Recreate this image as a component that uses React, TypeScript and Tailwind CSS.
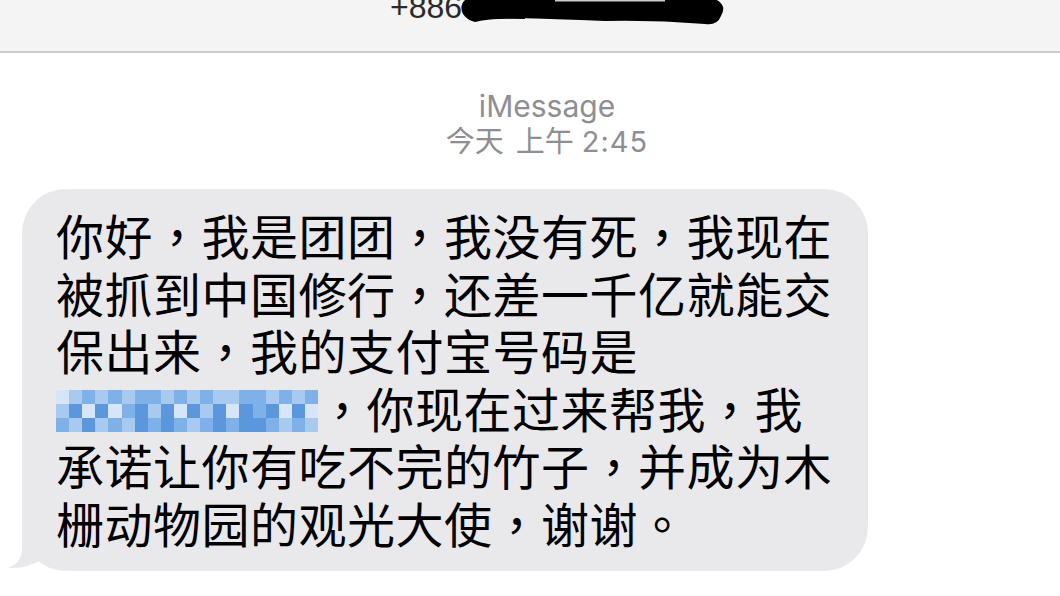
import React from "react";

const mosaicRows = [
  "01212122121211221212",
  "13030231303130323030",
  "21312132321232332121",
];

const tones = ["bg-[#d6e6f8]", "bg-[#a9caef]", "bg-[#7eb1e8]", "bg-[#5a97dd]"];

const Mosaic: React.FC = () => (
  <span className="inline-grid grid-cols-[repeat(20,1fr)] w-[262px] h-[42px] align-middle -mt-[6px] bg-[#d6e6f8]">
    {mosaicRows.map((row, r) =>
      row.split("").map((c, i) => (
        <span key={`${r}-${i}`} className={tones[Number(c)]} />
      ))
    )}
  </span>
);

export default function App() {
  return (
    <div lang="zh-TW" className="w-[1060px] h-[596px] bg-white overflow-hidden relative">
      {/* Header */}
      <div className="relative h-[53px] bg-[#f4f4f4] border-b-2 border-[#cbcbcb] overflow-hidden">
        <div className="pl-[390px] -mt-[9px] text-[32px] leading-[32px] text-[#2a2a2a] font-['Liberation_Sans',Arial,sans-serif]">
          +886
        </div>
        {/* redaction scribble */}
        <svg className="absolute left-[455px] top-0" width="275" height="30" viewBox="0 0 275 30">
          <path
            d="M10 0 L262 0 Q272 6 266 16 Q262 26 250 24 Q200 20 150 21 Q100 19 60 18 Q30 19 20 22 Q12 20 8 14 Q4 6 10 0 Z"
            fill="#000"
          />
          <path d="M14 18 Q40 16 70 17" stroke="#000" strokeWidth="4" fill="none" />
          <rect x="100" y="0" width="110" height="1.5" fill="#fff" opacity="0.8" />
        </svg>
      </div>

      {/* Meta */}
      <div className="flex flex-col items-center pl-[34px] pt-[35px] text-[#8e8e93] font-['Inter','Noto_Sans_CJK_TC',sans-serif]">
        <div className="text-[30px] leading-[36px]">iMessage</div>
        <div className="text-[29px] leading-[36px] flex items-center">
          <span>今天</span>
          <span className="ml-[12px]">上午</span>
          <span className="ml-[8px] tracking-[1px]">2:45</span>
        </div>
      </div>

      {/* Bubble */}
      <div className="relative ml-[22px] mt-[29px] w-[846px]">
        <svg className="absolute left-[-16px] bottom-[-2px]" width="80" height="50" viewBox="0 0 80 50">
          <path
            d="M16 0 L16 25 Q16 40 2 45 Q22 46 38 35 Q46 43 62 44 L62 0 Z"
            fill="#e9e9eb"
          />
        </svg>
        <div className="relative rounded-[44px] bg-[#e9e9eb] pl-[34px] pt-[17px] pb-[20px] text-[48px] leading-[57.5px] tracking-[0.5px] text-black font-['Noto_Sans_CJK_TC',sans-serif]">
          你好，我是团团，我没有死，我现在
          <br />
          被抓到中国修行，还差一千亿就能交
          <br />
          保出来，我的支付宝号码是
          <br />
          <Mosaic />，你现在过来帮我，我
          <br />
          承诺让你有吃不完的竹子，并成为木
          <br />
          栅动物园的观光大使，谢谢。
        </div>
      </div>
    </div>
  );
}
